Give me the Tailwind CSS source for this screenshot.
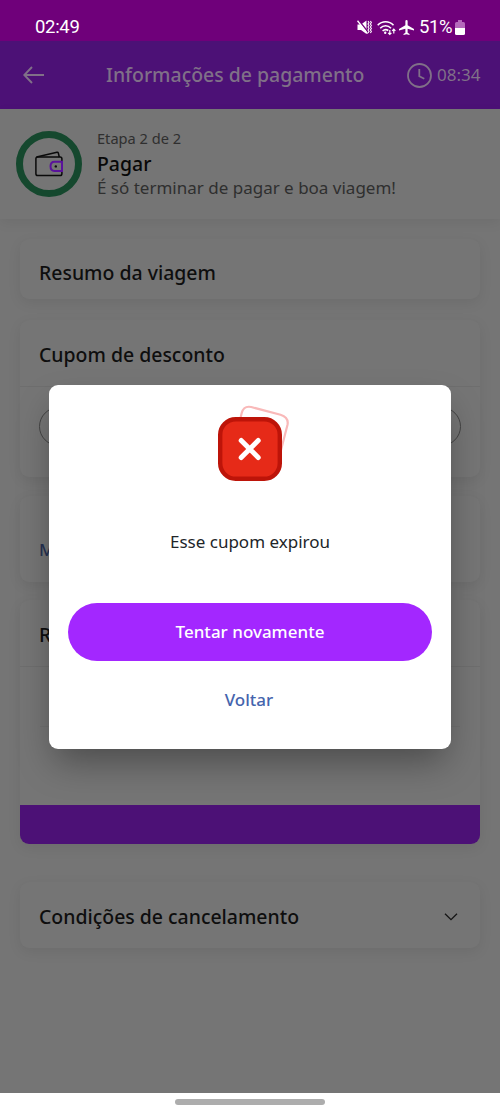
<!DOCTYPE html>
<html lang="pt-BR">
<head>
<meta charset="utf-8">
<title>Informações de pagamento</title>
<script src="https://cdn.jsdelivr.net/npm/@tailwindcss/browser@4"></script>
</head>
<body class="bg-[#757575] font-['Noto_Sans',sans-serif] text-[#0e0e0e]">
<div class="relative flex h-[1111px] w-[500px] flex-col overflow-hidden">
  <div class="flex h-[41px] shrink-0 items-start justify-between bg-[#6f007a] pt-[14px] pr-[35px] pl-[35px] font-['Roboto',sans-serif] text-white">
    <span class="text-[18.5px] leading-[27px] tracking-[-0.3px]">02:49</span>
    <div class="flex h-[27px] items-center">
      <svg class="mr-[5px] h-[15px] w-[15px]" viewBox="0 0 15 15" fill="none">
        <path d="M.5 4.500H4L9.500.5v13.500L4 10H.5z" fill="#fff"/>
        <path d="M1.400 0l10 12.500" stroke="#6f007a" stroke-width="1.500"/>
        <path d="M.5.800l10 12.800" stroke="#fff" stroke-width="1.400"/>
        <path d="M11 1l1 1.500-1 1.500 1 1.500-1 1.500 1 1.500-1 1.500 1 1.500-1 1.500M13.400 1l1 1.500-1 1.500 1 1.500-1 1.500 1 1.500-1 1.500 1 1.500-1 1.500" stroke="#fff" stroke-width="1.100"/>
      </svg>
      <svg class="mr-[3px] h-4 w-[19px]" viewBox="0 0 19 16" fill="none" stroke="#fff" stroke-width="1.600">
        <path d="M.7 5.200C5.200.5 12 .5 16.500 5.200M3.200 8.200c3.200-3.300 7.600-3.300 10.800 0M5.600 11c1.900-1.800 3.700-1.900 5.700-.5"/>
        <circle cx="8.200" cy="12.700" r="1.200" fill="#fff" stroke="none"/>
        <path d="M12.800 10v4.500M11.200 12.900l1.600 1.600 1.600-1.600M16.800 13.500V9.200M15.200 10.800l1.600-1.600 1.600 1.600" stroke-width="1.200"/>
      </svg>
      <svg class="mr-[5px] h-[15px] w-[15px]" viewBox="2 2 20 20"><path fill="#fff" d="M22 16v-2l-8.500-5V3.500a1.500 1.500 0 0 0-3 0V9L2 14v2l8.500-2.500V19L8 20.500V22l4-1 4 1v-1.500L13.500 19v-5.500z"/></svg>
      <span class="w-[34px] text-[18.500px] tracking-[-0.4px] whitespace-nowrap">51%</span>
      <svg class="ml-[2px] h-[15px] w-[10px]" viewBox="0 0 10 15"><path d="M3 0h4v2h1.500Q10 2 10 3.500V8H0V3.500Q0 2 1.500 2H3z" fill="#b469bb"/><path d="M0 8h10v5.500a1.500 1.500 0 0 1-1.500 1.500h-7A1.500 1.500 0 0 1 0 13.500z" fill="#fff"/></svg>
    </div>
  </div>

  <header class="flex h-[68px] shrink-0 items-center bg-[#4c1176] pr-[19px] pl-[23px] text-[#807088]">
    <svg class="h-[18px] w-[21px]" viewBox="0 0 21 18" fill="none" stroke="currentColor" stroke-width="1.900"><path d="M21 9H1.500M9 1L1.300 9 9 17"/></svg>
    <h1 class="ml-[62px] w-[260px] pb-px text-[19.450px] font-medium whitespace-nowrap">Informações de pagamento</h1>
    <svg class="ml-auto h-[25px] w-[25px]" viewBox="0 0 25 25" fill="none" stroke="currentColor" stroke-width="1.800"><circle cx="12.500" cy="12.500" r="11.500"/><path d="M12.300 6v7.200l5 2.600"/></svg>
    <span class="ml-[5px] w-[44px] pb-px text-[17px] whitespace-nowrap">08:34</span>
  </header>

  <section class="flex h-[110px] shrink-0 items-center pl-4 shadow-[0_4px_12px_rgba(0,0,0,0.06)]">
    <div class="flex h-[66px] w-[66px] items-center justify-center rounded-full border-[7px] border-[#15482e]">
      <svg class="h-7 w-7" viewBox="0 0 28 28" fill="none" stroke="#0a0a0a" stroke-width="1.500">
        <rect x=".9" y="7" width="26" height="18.500" rx="1.800"/>
        <path d="M1.500 7L22 2.200q1-.2 1.300.8L24.300 7"/>
        <path d="M27 11.700h-7.500q-4 0-4 4.600t4 4.600H27z" stroke="#5a129b" stroke-width="2"/>
        <circle cx="20.800" cy="16.400" r="1.200" fill="#0a0a0a" stroke="none"/>
      </svg>
    </div>
    <div class="ml-[15px] flex flex-col pb-[2px] whitespace-nowrap text-[#2f2f2f]">
      <span class="text-[14.600px] leading-[24px]">Etapa 2 de 2</span>
      <strong class="mt-px text-[19.450px] leading-[25px] font-medium text-[#080808]">Pagar</strong>
      <span class="text-[17px] leading-[24px]">É só terminar de pagar e boa viagem!</span>
    </div>
  </section>

  <main class="flex flex-col px-5 pt-5 text-[19.450px] font-medium">
    <section class="flex h-[60px] items-center rounded-[9px] bg-[#757575] px-[19px] pt-[7px] shadow-[0_4px_14px_rgba(0,0,0,0.07)]"><h2>Resumo da viagem</h2></section>
    <section class="mt-[21px] h-[157px] rounded-[9px] bg-[#757575] shadow-[0_4px_14px_rgba(0,0,0,0.07)]">
      <h2 class="flex h-[67px] items-center border-b border-[#6e6e6e] px-[19px] pt-[4px]">Cupom de desconto</h2>
      <div class="mx-[19px] mt-5 h-[39px] rounded-full border border-[#444]"></div>
    </section>
    <section class="mt-[19px] h-[86px] rounded-[9px] bg-[#757575] px-[19px] pt-[41px] text-[17px] text-[#263152] shadow-[0_4px_14px_rgba(0,0,0,0.07)]">M</section>
    <section class="mt-[18px] flex h-[244px] flex-col overflow-hidden rounded-[9px] bg-[#757575] shadow-[0_4px_14px_rgba(0,0,0,0.07)]">
      <h2 class="flex h-[67px] items-center border-b border-[#6e6e6e] px-[19px] pt-[4px]">R</h2>
      <div class="mx-5 mt-[59px] border-t border-[#707070]"></div>
      <div class="mt-auto h-[39px] bg-[#4c1176]"></div>
    </section>
    <section class="mt-[38px] flex h-[66px] items-center justify-between rounded-[9px] bg-[#757575] pr-[22px] pl-[19px] shadow-[0_4px_14px_rgba(0,0,0,0.07)]">
      <h2 class="pt-[3px]">Condições de cancelamento</h2>
      <svg class="mt-[3px] h-2 w-[14px]" viewBox="0 0 14 8" fill="none" stroke="#151515" stroke-width="1.300"><path d="M1 .7l6 6 6-6"/></svg>
    </section>
  </main>

  <div class="mt-auto flex h-[18px] shrink-0 items-start justify-center bg-white pt-[6px]"><div class="h-[6px] w-[150px] rounded-full bg-[#adadad]"></div></div>

  <div role="dialog" class="absolute top-[385px] left-[49px] flex h-[364px] w-[402px] flex-col items-center rounded-[9px] bg-white px-[19px] pt-[18px] shadow-[0_18px_36px_-6px_rgba(0,0,0,0.36)]">
    <svg class="h-[80px] w-[80px]" viewBox="210 403 80 80">
      <path d="M240.500 418l1.200-5q2-7.500 9.500-6L280.500 414.800q8.500 2.700 7 10L280 454" fill="none" stroke="#f9b9b9" stroke-width="2.200"/>
      <rect x="220.200" y="419.200" width="59.600" height="59.600" rx="15.500" fill="#e62a18" stroke="#bd1409" stroke-width="4.400"/>
      <path d="M241.200 440.500l17 17M258.200 440.500l-17 17" stroke="#fff" stroke-width="5" stroke-linecap="round"/>
    </svg>
    <p class="mt-[47px] text-[17px] leading-6 text-[#212529]">Esse cupom expirou</p>
    <button class="mt-[49px] h-[58px] w-full rounded-full bg-[#a327ff] text-[17px] font-medium text-white">Tentar novamente</button>
    <button class="mt-[27px] mr-[2px] text-[17px] leading-6 font-medium text-[#4564ad]">Voltar</button>
  </div>
</div>
</body>
</html>
